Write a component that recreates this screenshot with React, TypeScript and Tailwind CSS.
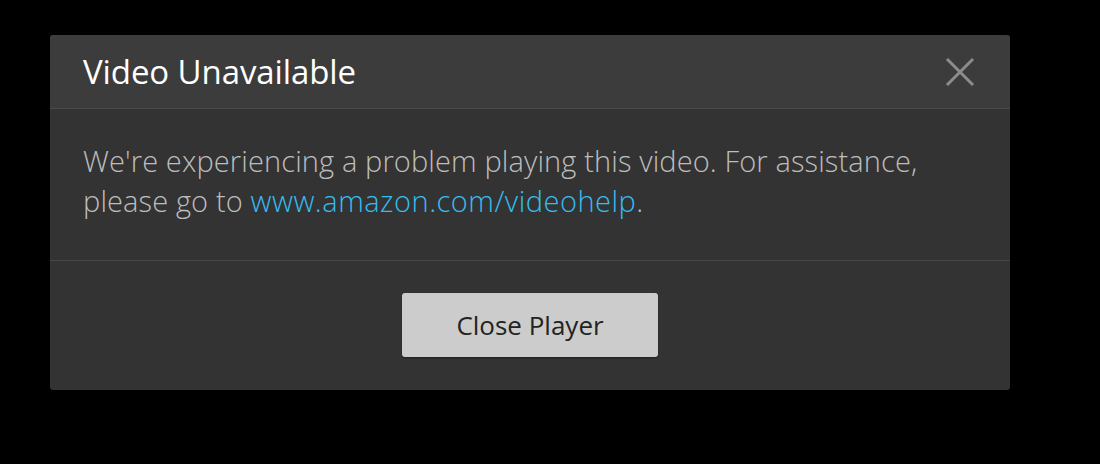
export default function App() {
  return (
    <div className="w-[1100px] h-[464px] bg-black pt-[35px] pl-[50px]" style={{ fontFamily: '"Open Sans", "Noto Sans", sans-serif' }}>
      <div className="w-[960px] h-[355px] rounded-[3px] bg-[#333333] overflow-hidden flex flex-col">
        <div className="h-[74px] bg-[#3c3c3c] border-b border-[#4a4a4a] flex items-center justify-between pl-[33px] pr-[34px]">
          <h1 className="text-[33px] text-white leading-none tracking-[-0.1px]">Video Unavailable</h1>
          <svg width="32" height="32" viewBox="0 0 32 32" className="block">
            <path d="M3 3 L29 29 M29 3 L3 29" stroke="#8c8c8c" strokeWidth="3" fill="none" />
          </svg>
        </div>
        <div className="h-[152px] border-b border-[#474747] pl-[33px] pt-[32px]">
          <p className="text-[29px] font-light text-[#bdbdbd] leading-[40px] tracking-[0.12px]">
            We're experiencing a problem playing this video. For assistance,
            <br />
            please go to <span className="text-[#36bcf0] tracking-[0.5px]">www.amazon.com/videohelp</span>.
          </p>
        </div>
        <div className="flex-1 flex justify-center pt-[32px]">
          <button className="w-[256px] h-[64px] rounded-[3px] bg-[#cccccc] text-[#232323] text-[26px] shadow-[0_1px_2px_rgba(0,0,0,0.4)]">
            Close Player
          </button>
        </div>
      </div>
    </div>
  );
}
